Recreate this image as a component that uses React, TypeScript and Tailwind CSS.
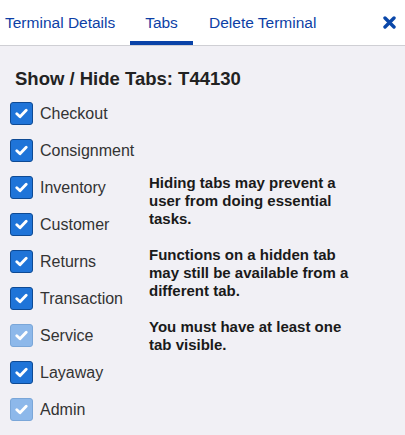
const tabs = [
  { name: 'Checkout', disabled: false },
  { name: 'Consignment', disabled: false },
  { name: 'Inventory', disabled: false },
  { name: 'Customer', disabled: false },
  { name: 'Returns', disabled: false },
  { name: 'Transaction', disabled: false },
  { name: 'Service', disabled: true },
  { name: 'Layaway', disabled: false },
  { name: 'Admin', disabled: true },
];

const Check = ({ disabled }: { disabled: boolean }) => (
  <span
    className={
      'flex items-center justify-center w-[23px] h-[23px] rounded-[3px] border ' +
      (disabled ? 'bg-[#8db8ea] border-[#7aa6d8]' : 'bg-[#1f74d8] border-[#0e4a94]')
    }
  >
    <svg width="13" height="11" viewBox="0 0 13 11">
      <path d="M1.8 5.8 L5 8.8 L11.2 2.2" fill="none" stroke="white" strokeWidth="2.8" strokeLinecap="round" strokeLinejoin="round" />
    </svg>
  </span>
);

const App = () => {
  return (
    <div className="w-[405px] h-[435px] bg-[#f1f0f5] font-['Liberation_Sans',Arial,sans-serif] overflow-hidden">
      <div className="h-[46px] bg-white border-b border-[#cfcfd4] flex items-stretch">
        <div className="flex items-stretch flex-1">
          <span className="w-[130px] pl-[5px] flex items-center text-[15.5px] text-[#0d3fa6] whitespace-nowrap">Terminal Details</span>
          <span className="relative w-[63px] flex items-center justify-center text-[15.5px] text-[#0d3fa6]">
            Tabs
            <span className="absolute left-0 right-0 bottom-0 h-[4px] bg-[#0a43a8]"></span>
          </span>
          <span className="pl-[16px] flex items-center text-[15.5px] text-[#0d3fa6] whitespace-nowrap">Delete Terminal</span>
        </div>
        <div className="flex items-center pr-[9px]">
          <svg width="13" height="13" viewBox="0 0 13 13">
            <path d="M2 2 L11 11 M11 2 L2 11" stroke="#0a47a9" strokeWidth="3.4" strokeLinecap="round" />
          </svg>
        </div>
      </div>

      <div className="pl-[15px] pt-[22px] text-[18.5px] leading-[22px] font-bold text-[#222]">Show / Hide Tabs: T44130</div>

      <div className="flex mt-[12px]">
        <div className="pl-[10px] flex flex-col gap-[14px] w-[149px]">
          {tabs.map((t) => (
            <div key={t.name} className="flex items-center gap-[7px] h-[23px]">
              <Check disabled={t.disabled} />
              <span className="text-[16px] text-[#333]">{t.name}</span>
            </div>
          ))}
        </div>
        <div className="pt-[72px] w-[212px] text-[15px] font-bold leading-[18px] text-[#1a1a1a] flex flex-col gap-[18px]">
          <p>Hiding tabs may prevent a user from doing essential tasks.</p>
          <p>Functions on a hidden tab may still be available from a different tab.</p>
          <p>You must have at least one tab visible.</p>
        </div>
      </div>
    </div>
  );
};

export default App;
